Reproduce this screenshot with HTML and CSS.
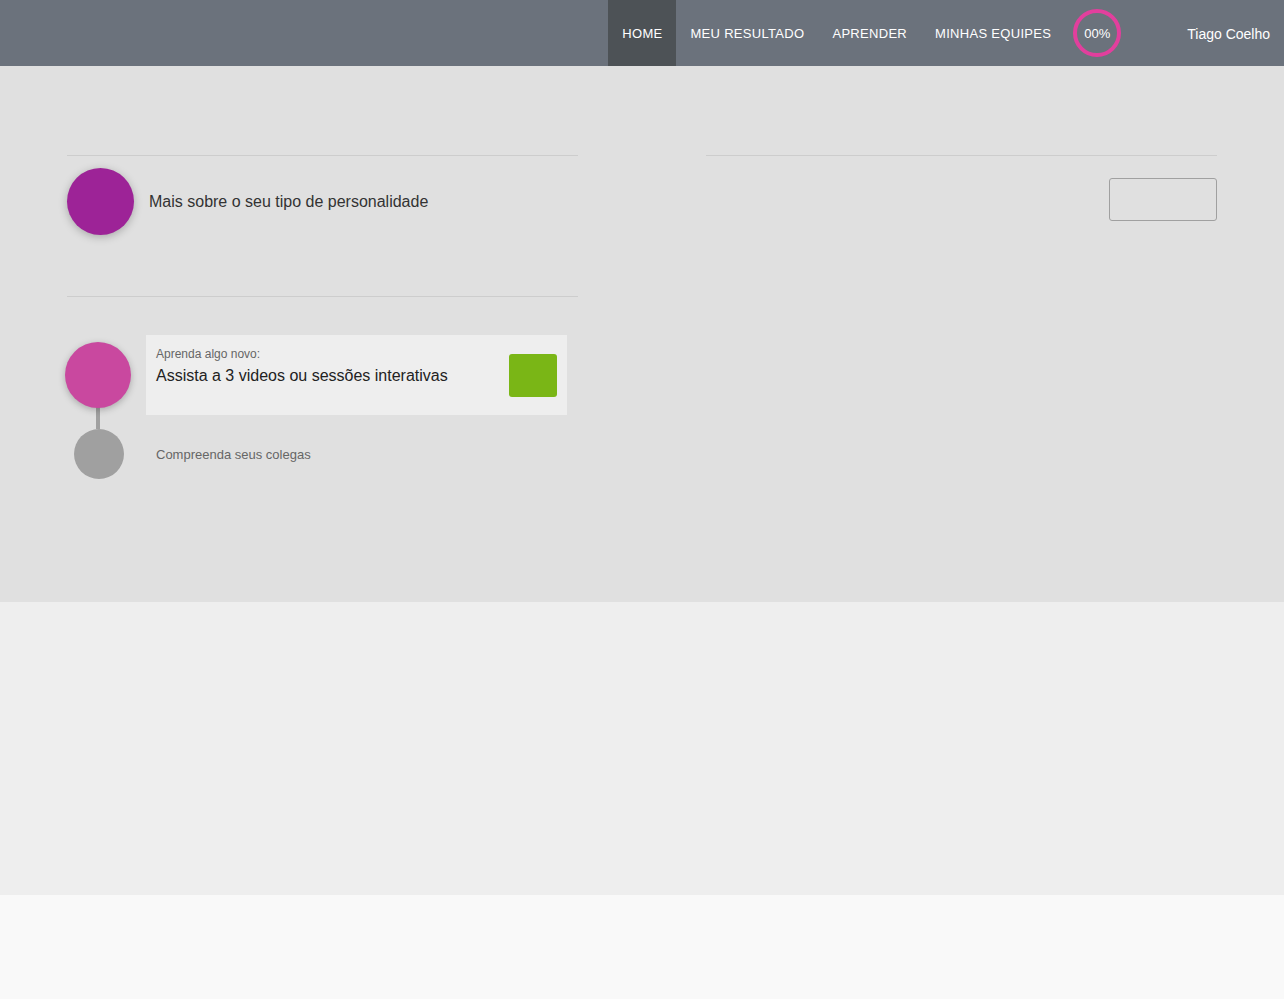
FILE: index.html
```html
<!DOCTYPE html>
<html lang="pt">
<head>
<meta charset="utf-8">
<title>Home</title>
<link rel="stylesheet" href="styles.css">
</head>
<body>
<header class="topbar">
  <nav class="nav">
    <a class="nav-item active" href="#">HOME</a>
    <a class="nav-item" href="#">MEU RESULTADO</a>
    <a class="nav-item" href="#">APRENDER</a>
    <a class="nav-item" href="#">MINHAS EQUIPES</a>
    <div class="progress"><span>00%</span></div>
    <a class="user" href="#">Tiago Coelho</a>
  </nav>
</header>
<main>
  <section class="hero">
    <div class="container">
      <div class="col">
        <hr class="rule">
        <div class="type-row">
          <div class="dot dot-purple"></div>
          <span class="type-text">Mais sobre o seu tipo de personalidade</span>
        </div>
        <hr class="rule rule-2">
        <div class="steps">
          <div class="step step-active">
            <div class="step-marker"><div class="dot dot-pink"></div></div>
            <div class="card">
              <div class="card-text">
                <div class="card-label">Aprenda algo novo:</div>
                <div class="card-title">Assista a 3 videos ou sessões interativas</div>
              </div>
              <div class="go"></div>
            </div>
          </div>
          <div class="step">
            <div class="step-marker"><div class="link"></div><div class="dot dot-gray"></div></div>
            <div class="step-label">Compreenda seus colegas</div>
          </div>
        </div>
      </div>
      <div class="col">
        <hr class="rule">
        <div class="btn-row"><button class="ghost-btn" type="button"></button></div>
      </div>
    </div>
  </section>
  <section class="band"></section>
  <footer class="foot"></footer>
</main>
</body>
</html>
```
FILE: styles.css
```css
* { box-sizing: border-box; }
html, body { margin: 0; padding: 0; }
body {
  font-family: "Liberation Sans", Arial, sans-serif;
  background: #f9f9f9;
  color: #333;
}
.topbar {
  height: 66px;
  background: #6b727c;
}
.nav {
  display: flex;
  align-items: stretch;
  justify-content: flex-end;
  height: 66px;
  padding-right: 14px;
}
.nav-item {
  display: flex;
  align-items: center;
  padding: 1px 14px 0;
  color: #fff;
  font-size: 13px;
  letter-spacing: 0.3px;
  text-decoration: none;
}
.nav-item.active { background: #4d5256; }
.progress {
  align-self: center;
  width: 48px;
  height: 48px;
  margin-left: 8px;
  border: 4px solid #e23f9d;
  border-radius: 50%;
  display: flex;
  align-items: center;
  justify-content: center;
  color: #fff;
  font-size: 13px;
}
.progress span { margin-top: 1px; }
.user {
  display: flex;
  align-items: center;
  margin-left: 66px;
  padding-top: 1px;
  color: #fff;
  font-size: 14px;
  text-decoration: none;
}
.hero {
  height: 536px;
  background: #e0e0e0;
  padding-top: 89px;
}
.container {
  display: grid;
  grid-template-columns: 511px 511px;
  column-gap: 128px;
  width: 1150px;
  margin-left: 67px;
}
.rule {
  margin: 0;
  border: 0;
  border-top: 1px solid #cdcdcd;
  height: 0;
}
.rule-2 { margin-top: 61px; }
.type-row {
  display: flex;
  align-items: center;
  margin-top: 12px;
  height: 67px;
}
.dot { border-radius: 50%; flex: none; }
.dot-purple {
  width: 67px;
  height: 67px;
  background: #9d2397;
  box-shadow: 0 2px 8px rgba(0,0,0,0.25);
}
.type-text {
  margin-left: 15px;
  font-size: 16px;
  color: #333;
}
.steps { margin-top: 38px; }
.step { display: flex; }
.step-marker {
  width: 79px;
  flex: none;
  display: flex;
  flex-direction: column;
  align-items: flex-start;
}
.step-active .step-marker { padding-top: 7px; margin-left: -2px; width: 81px; }
.dot-pink {
  width: 66px;
  height: 66px;
  background: #c9489f;
  box-shadow: 0 2px 7px rgba(0,0,0,0.25);
  position: relative;
  z-index: 1;
}
.card {
  width: 421px;
  height: 80px;
  background: #eeeeee;
  display: flex;
  align-items: center;
  justify-content: space-between;
  padding: 0 10px;
}
.card-text { align-self: flex-start; padding-top: 12px; }
.card-label { font-size: 12px; line-height: 14px; color: #666; }
.card-title { font-size: 16px; line-height: 18px; color: #222; margin-top: 6px; }
.go {
  width: 48px;
  height: 43px;
  background: #7ab616;
  border-radius: 3px;
}
.step:not(.step-active) .step-marker { margin-top: -8px; padding-left: 7px; }
.link {
  width: 4px;
  height: 22px;
  background: #a0a0a0;
  margin-left: 22px;
}
.dot-gray {
  width: 50px;
  height: 50px;
  background: #a0a0a0;
}
.step-label {
  font-size: 13px;
  color: #666;
  margin-top: 32px;
  padding-left: 10px;
}
.btn-row {
  display: flex;
  justify-content: flex-end;
  margin-top: 22px;
}
.ghost-btn {
  width: 108px;
  height: 43px;
  border: 1px solid #a0a0a0;
  border-radius: 3px;
  background: transparent;
}
.band { height: 293px; background: #eeeeee; }
.foot { height: 104px; background: #f9f9f9; }
```
